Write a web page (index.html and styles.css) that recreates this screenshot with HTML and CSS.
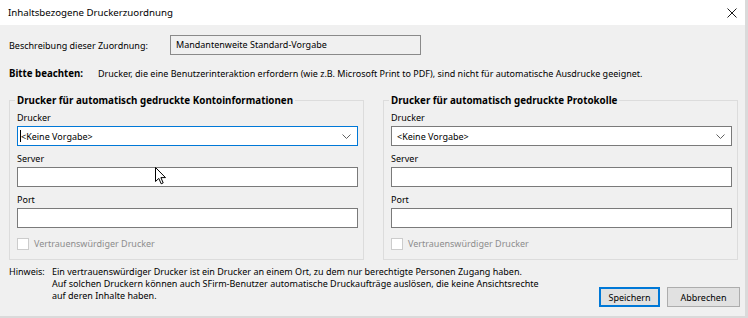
FILE: index.html
```html
<!DOCTYPE html>
<html lang="de">
<head>
    <meta charset="UTF-8">
    <meta name="viewport" content="width=device-width, initial-scale=1.0">
    <title>Inhaltsbezogene Druckerzuordnung</title>
    <link rel="stylesheet" href="styles.css">
</head>
<body>
    <div class="window">
        <div class="titlebar">
            <span class="title">Inhaltsbezogene Druckerzuordnung</span>
            <svg class="close" width="10" height="10" viewBox="0 0 10 10">
                <path d="M0.5 0.5 L9.5 9.5 M9.5 0.5 L0.5 9.5" stroke="#1a1a1a" stroke-width="1"/>
            </svg>
        </div>
        <div class="content">
            <div class="desc-row">
                <span class="desc-label">Beschreibung dieser Zuordnung:</span>
                <div class="readonly-box">Mandantenweite Standard-Vorgabe</div>
            </div>
            <div class="note-row">
                <span class="note-label">Bitte beachten:</span>
                <span>Drucker, die eine Benutzerinteraktion erfordern (wie z.B. Microsoft Print to PDF), sind nicht für automatische Ausdrucke geeignet.</span>
            </div>

            <div class="groups">
                <fieldset class="group">
                    <legend>Drucker für automatisch gedruckte Kontoinformationen</legend>
                    <div class="field">
                        <span class="field-label">Drucker</span>
                        <div class="combo focused">
                            <span class="text-caret"></span>
                            <span>&lt;Keine Vorgabe&gt;</span>
                            <svg class="chevron" width="9" height="5" viewBox="0 0 9 5"><path d="M0.5 0.5 L4.5 4.5 L8.5 0.5" fill="none" stroke="#606060"/></svg>
                        </div>
                    </div>
                    <div class="field">
                        <span class="field-label">Server</span>
                        <div class="textbox"></div>
                    </div>
                    <div class="field">
                        <span class="field-label">Port</span>
                        <div class="textbox"></div>
                    </div>
                    <div class="check-row">
                        <span class="checkbox"></span>
                        <span>Vertrauenswürdiger Drucker</span>
                    </div>
                </fieldset>

                <fieldset class="group">
                    <legend>Drucker für automatisch gedruckte Protokolle</legend>
                    <div class="field">
                        <span class="field-label">Drucker</span>
                        <div class="combo">
                            <span>&lt;Keine Vorgabe&gt;</span>
                            <svg class="chevron" width="9" height="5" viewBox="0 0 9 5"><path d="M0.5 0.5 L4.5 4.5 L8.5 0.5" fill="none" stroke="#606060"/></svg>
                        </div>
                    </div>
                    <div class="field">
                        <span class="field-label">Server</span>
                        <div class="textbox"></div>
                    </div>
                    <div class="field">
                        <span class="field-label">Port</span>
                        <div class="textbox"></div>
                    </div>
                    <div class="check-row">
                        <span class="checkbox"></span>
                        <span>Vertrauenswürdiger Drucker</span>
                    </div>
                </fieldset>
            </div>

            <div class="footer">
                <div class="hint">
                    <span class="hint-label">Hinweis:</span>
                    <p>Ein vertrauenswürdiger Drucker ist ein Drucker an einem Ort, zu dem nur berechtigte Personen Zugang haben.<br>
                    Auf solchen Druckern können auch SFirm-Benutzer automatische Druckaufträge auslösen, die keine Ansichtsrechte<br>
                    auf deren Inhalte haben.</p>
                </div>
                <div class="buttons">
                    <button class="default">Speichern</button>
                    <button>Abbrechen</button>
                </div>
            </div>
        </div>

        <!-- Mauszeiger über dem Server-Feld -->
        <svg class="pointer" width="12" height="18" viewBox="0 0 12 18">
            <path d="M0.5 0.5 L0.5 14.5 L3.8 11.4 L6.2 16.8 L8.2 15.9 L5.9 10.6 L10.5 10.6 Z" fill="#fff" stroke="#000" stroke-width="1" stroke-linejoin="miter"/>
        </svg>
    </div>
</body>
</html>
```

FILE: styles.css
```css
body {
    margin: 0;
    font-family: "Noto Sans", "Open Sans", sans-serif;
    font-size: 9px;
    color: #000;
    background: #fff;
}
.window {
    position: relative;
    width: 745px;
    height: 316px;
    display: flex;
    flex-direction: column;
    border-right: 3px solid #dadada;
    border-bottom: 2px solid #dadada;
}
.titlebar {
    height: 25px;
    background: #fff;
    display: flex;
    align-items: center;
    justify-content: space-between;
    padding: 0 8px 0 8px;
    flex-shrink: 0;
}
.title {
    font-size: 9.7px;
}
.content {
    flex: 1;
    background: #f0f0f0;
    padding: 10px 7px 0 9px;
}
.desc-row {
    display: flex;
    align-items: center;
    height: 20px;
}
.desc-label {
    width: 161px;
}
.readonly-box {
    box-sizing: border-box;
    width: 251px;
    height: 20px;
    line-height: 18px;
    padding-left: 5px;
    border: 1px solid #8a8a8a;
    background: #f0f0f0;
}
.note-row {
    display: flex;
    margin-top: 13px;
    line-height: 12px;
}
.note-label {
    width: 89px;
    font-weight: bold;
    font-size: 9.7px;
}
.groups {
    display: grid;
    grid-template-columns: 355px 355px;
    column-gap: 19px;
    margin-top: 14px;
}
.group {
    margin: 0;
    min-width: 0;
    padding: 5px 5px 9px 7px;
    border: 1px solid #dcdcdc;
    display: flex;
    flex-direction: column;
    gap: 7px;
}
.group legend {
    font-weight: bold;
    font-size: 9.8px;
    line-height: 13px;
    padding: 0 2px;
    margin-left: -2px;
}
.field {
    display: flex;
    flex-direction: column;
}
.field-label {
    line-height: 12px;
    margin-bottom: 2px;
}
.combo, .textbox {
    box-sizing: border-box;
    height: 20px;
    background: #fff;
    border: 1px solid #7a7a7a;
}
.combo {
    display: flex;
    align-items: center;
    padding: 0 6px 0 5px;
}
.combo span:not(.text-caret) {
    flex: 1;
}
.combo.focused {
    border-color: #0078d7;
    padding-left: 2px;
}
.text-caret {
    width: 1px;
    height: 12px;
    background: #000;
}
.chevron {
    margin-top: 1px;
}
.check-row {
    display: flex;
    align-items: center;
    gap: 5px;
    margin-top: 3px;
    line-height: 12px;
    color: #8d8d8d;
}
.checkbox {
    box-sizing: border-box;
    width: 12px;
    height: 12px;
    border: 1px solid #cccccc;
    background: #fff;
}
.footer {
    display: flex;
    justify-content: space-between;
    margin-top: 6px;
}
.hint {
    display: flex;
    line-height: 12px;
}
.hint-label {
    width: 43px;
}
.hint p {
    margin: 0;
}
.buttons {
    display: flex;
    gap: 7px;
    margin-top: 21px;
    margin-right: -2px;
}
button {
    box-sizing: border-box;
    font-family: inherit;
    font-size: 9px;
    height: 20px;
    padding: 0;
    background: #e1e1e1;
    border: 1px solid #adadad;
    color: #000;
}
button.default {
    width: 61px;
    border: 2px solid #0078d7;
}
button:not(.default) {
    width: 73px;
}
.pointer {
    position: absolute;
    left: 155px;
    top: 167px;
}
```
